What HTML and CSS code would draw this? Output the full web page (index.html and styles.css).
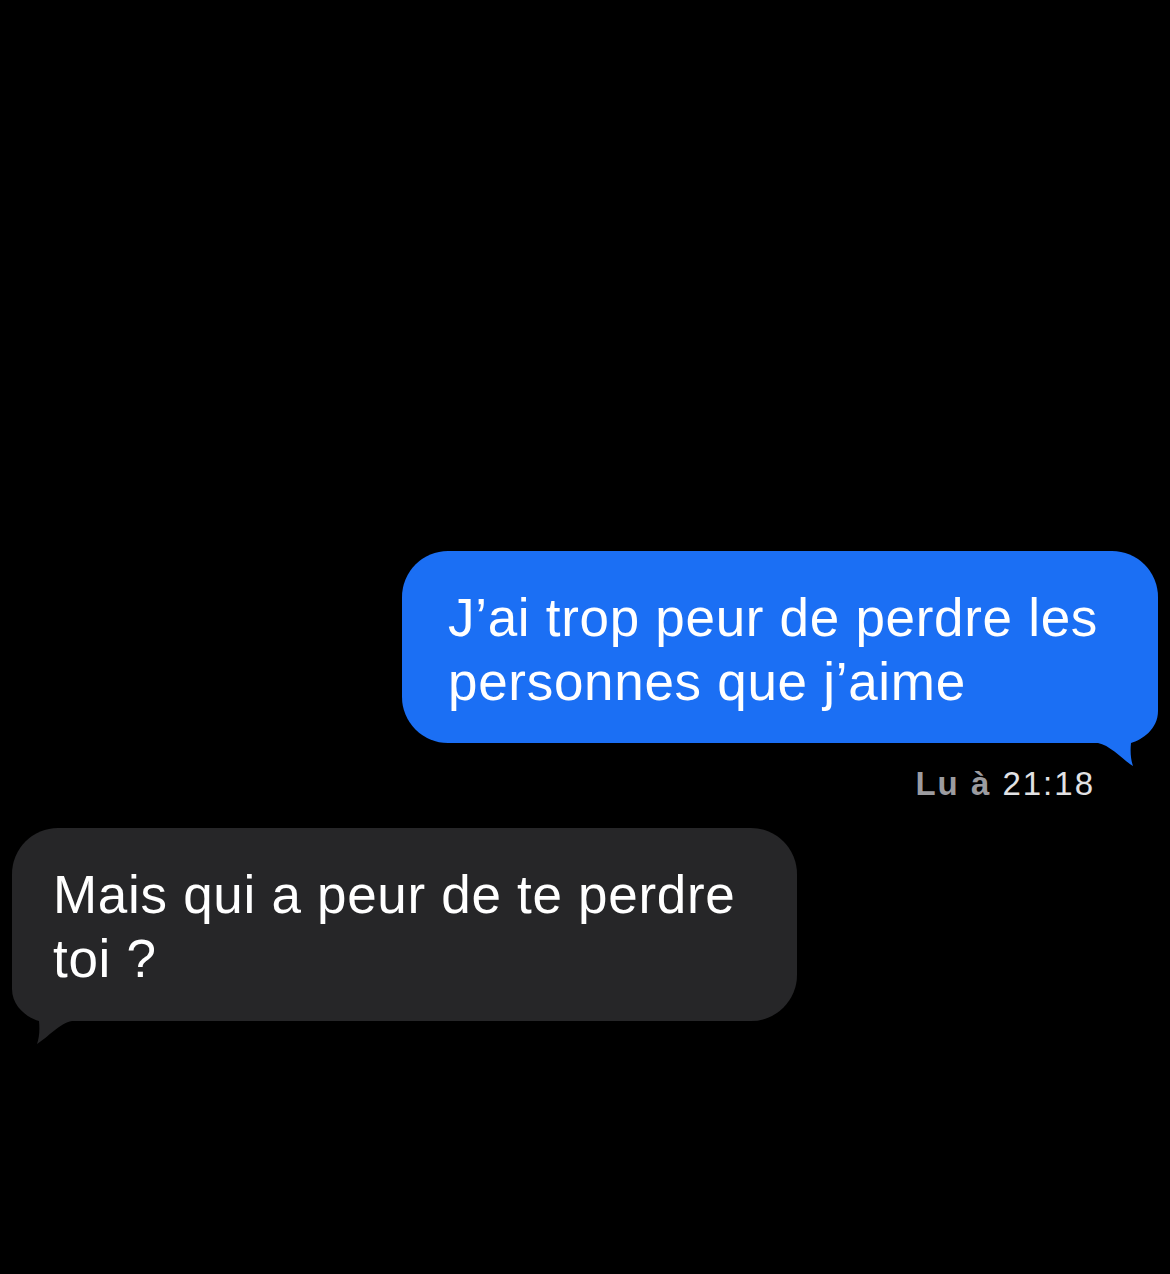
FILE: index.html
```html
<!DOCTYPE html>
<html lang="fr">
<head>
    <meta charset="UTF-8">
    <meta name="viewport" content="width=device-width, initial-scale=1.0">
    <title>Messages</title>
    <link rel="stylesheet" href="styles.css">
</head>
<body>

    <div class="thread">
        <!-- Sent message -->
        <div class="bubble sent">
            <p>J’ai trop peur de perdre les<br>personnes que j’aime</p>
            <svg class="tail" width="60" height="72" viewBox="0 0 60 72">
                <path d="M60 0 L60 14 C60 32 44 43 33 46 C32 56 33 63 35 69 C25 63 12 48 0 46 L0 0 Z"/>
            </svg>
        </div>
        <div class="receipt"><b>Lu à</b> 21:18</div>

        <!-- Received message -->
        <div class="bubble received">
            <p>Mais qui a peur de te perdre<br>toi ?</p>
            <svg class="tail" width="60" height="72" viewBox="0 0 60 72">
                <path d="M60 0 L60 14 C60 32 44 43 33 46 C32 56 33 63 35 69 C25 63 12 48 0 46 L0 0 Z"/>
            </svg>
        </div>
    </div>

</body>
</html>
```

FILE: styles.css
```css
* {
    margin: 0;
    padding: 0;
    box-sizing: border-box;
}

body {
    background-color: #000;
    font-family: "Liberation Sans", Arial, sans-serif;
    color: white;
}

.thread {
    display: flex;
    flex-direction: column;
    padding: 551px 12px 0 12px;
    height: 1274px;
}

/* Message bubbles */
.bubble {
    position: relative;
    border-radius: 46px;
    font-size: 53px;
    line-height: 64px;
    letter-spacing: 0.7px;
}

.bubble p {
    position: relative;
    z-index: 1;
}

.bubble .tail {
    position: absolute;
    bottom: -26px;
}

.sent {
    align-self: flex-end;
    width: 756px;
    height: 192px;
    padding: 35px 20px 0 46px;
    background-color: #1b6ff4;
}

.sent .tail {
    right: 0;
    fill: #1b6ff4;
}

.received {
    align-self: flex-start;
    width: 785px;
    height: 193px;
    margin-top: 24px;
    padding: 35px 20px 0 41px;
    background-color: #262628;
}

.received .tail {
    left: 0;
    fill: #262628;
    transform: scaleX(-1);
}

/* Read receipt */
.receipt {
    align-self: flex-end;
    margin: 21px 63px 0 0;
    font-size: 33px;
    line-height: 40px;
    letter-spacing: 2px;
    color: #e2e2e4;
}

.receipt b {
    color: #9c9ca0;
}
```
